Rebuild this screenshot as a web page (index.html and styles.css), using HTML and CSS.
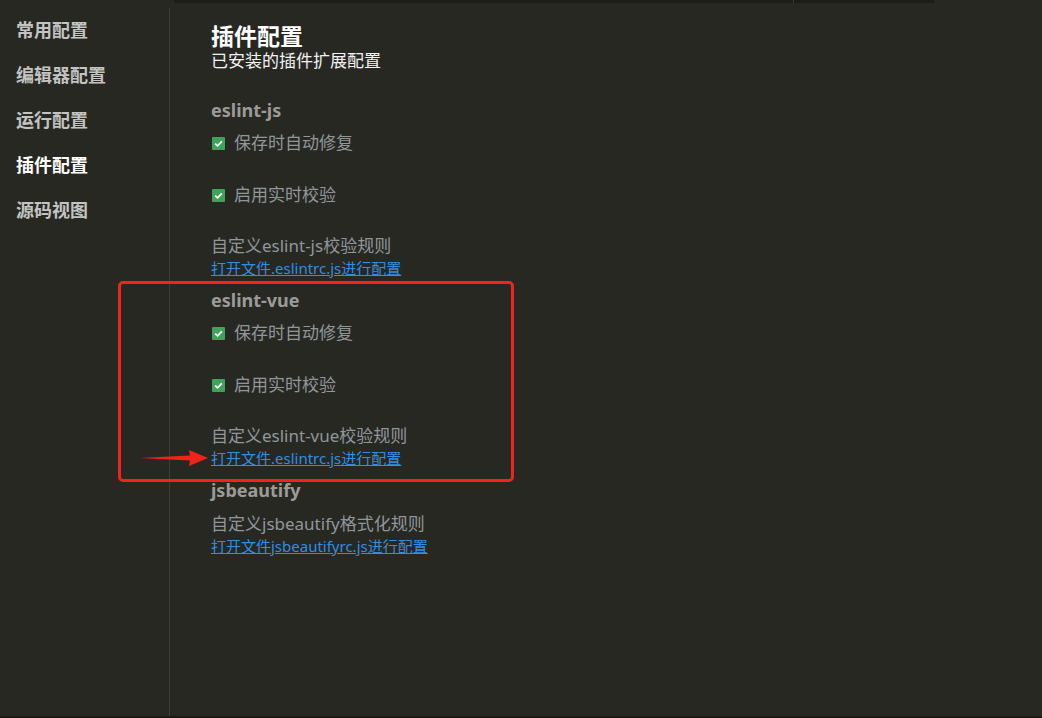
FILE: index.html
```html
<!DOCTYPE html>
<html lang="zh">
<head>
<meta charset="utf-8">
<title>插件配置</title>
<link rel="stylesheet" href="styles.css">
</head>
<body>
<div class="app">
  <div class="topstrip"><span class="seg seg1"></span><span class="seg seg2"></span></div>
  <aside class="sidebar">
    <div class="nav-item">常用配置</div>
    <div class="nav-item">编辑器配置</div>
    <div class="nav-item">运行配置</div>
    <div class="nav-item active">插件配置</div>
    <div class="nav-item">源码视图</div>
  </aside>
  <main class="content">
    <h1 class="title">插件配置</h1>
    <div class="subtitle">已安装的插件扩展配置</div>

    <section class="plugin">
      <h2 class="plugin-name">eslint-js</h2>
      <label class="check-row"><span class="cb"><svg viewBox="0 0 13 13" width="13" height="13"><path d="M3.2 6.6 L5.6 8.8 L9.8 4.4" fill="none" stroke="#fff" stroke-width="1.8"/></svg></span>保存时自动修复</label>
      <label class="check-row gap"><span class="cb"><svg viewBox="0 0 13 13" width="13" height="13"><path d="M3.2 6.6 L5.6 8.8 L9.8 4.4" fill="none" stroke="#fff" stroke-width="1.8"/></svg></span>启用实时校验</label>
      <div class="custom">自定义eslint-js校验规则</div>
      <a class="link" href="#">打开文件.eslintrc.js进行配置</a>
    </section>

    <section class="plugin">
      <h2 class="plugin-name">eslint-vue</h2>
      <label class="check-row"><span class="cb"><svg viewBox="0 0 13 13" width="13" height="13"><path d="M3.2 6.6 L5.6 8.8 L9.8 4.4" fill="none" stroke="#fff" stroke-width="1.8"/></svg></span>保存时自动修复</label>
      <label class="check-row gap"><span class="cb"><svg viewBox="0 0 13 13" width="13" height="13"><path d="M3.2 6.6 L5.6 8.8 L9.8 4.4" fill="none" stroke="#fff" stroke-width="1.8"/></svg></span>启用实时校验</label>
      <div class="custom">自定义eslint-vue校验规则</div>
      <a class="link" href="#">打开文件.eslintrc.js进行配置</a>
    </section>

    <section class="plugin">
      <h2 class="plugin-name">jsbeautify</h2>
      <div class="custom short">自定义jsbeautify格式化规则</div>
      <a class="link" href="#">打开文件jsbeautifyrc.js进行配置</a>
    </section>
  </main>
  <div class="annot-box"></div>
  <svg class="annot-arrow" width="70" height="20" viewBox="0 0 70 20"><polygon points="0,10 50,7.5 49,2 68,10 49,18 50,12.5" fill="#f2231a"/></svg>
  <div class="bottomstrip"></div>
</div>
</body>
</html>
```

FILE: styles.css
```css
html, body {
  margin: 0;
  padding: 0;
  background: #282823;
}
body {
  font-family: "Noto Sans", "Noto Sans CJK SC", sans-serif;
  width: 1042px;
  height: 718px;
  overflow: hidden;
}
.app {
  position: relative;
  display: flex;
  width: 1042px;
  height: 718px;
  background: #282823;
}
.topstrip {
  position: absolute;
  left: 174px;
  top: 0;
  width: 868px;
  height: 3px;
  display: flex;
}
.seg1 {
  width: 619px;
  background: #1c1c19;
  border-right: 1px solid #3a3a36;
}
.seg2 {
  width: 140px;
  background: #1c1c19;
}
.bottomstrip {
  position: absolute;
  left: 0;
  bottom: 0;
  width: 1042px;
  height: 2px;
  background: #1a1a17;
}
.sidebar {
  width: 170px;
  flex: none;
  box-sizing: border-box;
  padding-top: 8px;
  position: relative;
}
.sidebar::after {
  content: "";
  position: absolute;
  right: 0;
  top: 8px;
  bottom: 0;
  width: 1px;
  background: #3d3d39;
}
.nav-item {
  padding-left: 16px;
  font-size: 18px;
  font-weight: bold;
  line-height: 45px;
  color: #c3c3c1;
}
.nav-item.active {
  color: #ffffff;
}
.content {
  padding-left: 41px;
  padding-top: 23px;
  flex: 1;
}
.title {
  margin: 0;
  font-size: 23px;
  line-height: 26px;
  font-weight: bold;
  color: #ffffff;
}
.subtitle {
  font-size: 17px;
  line-height: 24px;
  color: #f2f2f2;
  margin-bottom: 25px;
}
.plugin {
  display: flex;
  flex-direction: column;
  align-items: flex-start;
  margin-bottom: 10px;
}
.plugin-name {
  margin: 0;
  font-size: 18px;
  line-height: 24px;
  font-weight: bold;
  color: #9b9b98;
}
.check-row {
  display: flex;
  align-items: center;
  margin-top: 9px;
  font-size: 17px;
  line-height: 24px;
  color: #8f979b;
}
.check-row.gap {
  margin-top: 28px;
}
.cb {
  width: 13px;
  height: 13px;
  background: #3fa35a;
  border-radius: 1px;
  margin-left: 1px;
  margin-right: 9px;
  display: inline-flex;
}
.custom {
  margin-top: 27px;
  font-size: 17px;
  line-height: 24px;
  color: #8f979b;
}
.custom.short {
  margin-top: 10px;
}
.link {
  font-size: 15px;
  line-height: 20px;
  color: #2e8fe3;
  text-decoration: underline;
}
.annot-box {
  position: absolute;
  left: 118px;
  top: 281px;
  width: 396px;
  height: 201px;
  box-sizing: border-box;
  border: 3px solid #f2231a;
  border-radius: 5px;
}
.annot-arrow {
  position: absolute;
  left: 140px;
  top: 448px;
}
```
